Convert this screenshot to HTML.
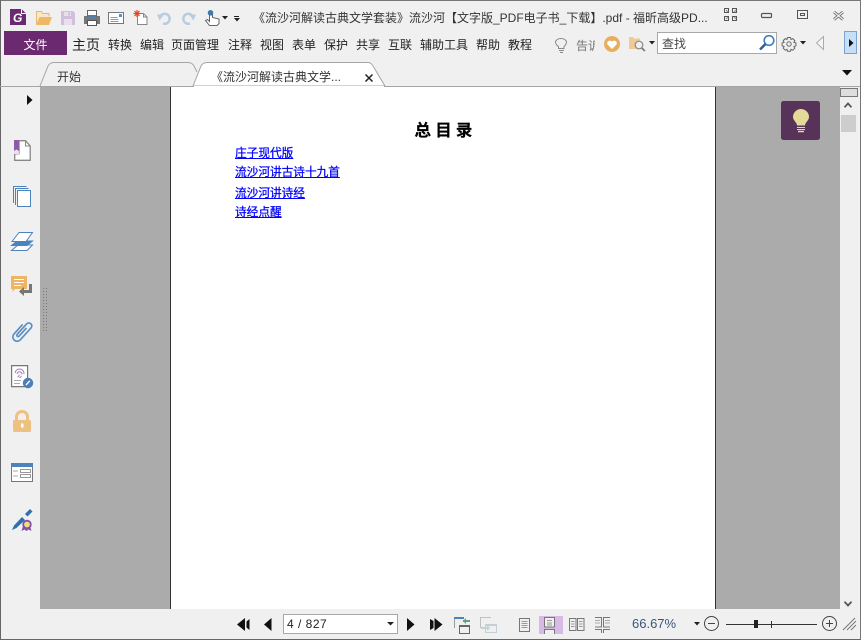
<!DOCTYPE html>
<html><head><meta charset="utf-8">
<style>
html,body{margin:0;padding:0;width:861px;height:640px;overflow:hidden;background:#f0f0f0}
body{position:relative;font-family:"Liberation Sans","Noto Sans CJK SC",sans-serif;color:#333}
.a{position:absolute;white-space:nowrap}
.m{position:absolute;top:37px;font-size:12px;line-height:16px;color:#222;white-space:nowrap}
a.l{position:absolute;left:235px;font-size:11.67px;line-height:14px;color:#00f;text-decoration:underline;white-space:nowrap;-webkit-text-stroke:.25px #00f}
svg{position:absolute;overflow:visible}
</style></head><body>
<!-- window border -->
<div class="a" style="left:0;top:0;width:861px;height:1px;background:#777"></div>
<div class="a" style="left:0;top:0;width:1px;height:640px;background:#666"></div>
<div class="a" style="left:860px;top:0;width:1px;height:640px;background:#777"></div>
<div class="a" style="left:0;top:639px;width:861px;height:1px;background:#666"></div>

<!-- app logo -->
<svg style="left:10px;top:9px" width="16" height="16"><path d="M0 0h11l5 5v11H0z" fill="#6a2a70"/><path d="M11 0l5 5h-5z" fill="#fff"/><path d="M12 .5l3.500 3.500h-3.500z" fill="#6a2a70"/><text x="3" y="13" font-family="Liberation Sans" font-weight="bold" font-style="italic" font-size="12" fill="#fff">G</text></svg>
<!-- open -->
<svg style="left:36px;top:11px" width="16" height="14"><path d="M.5 13V.5h5l1 2h6.500v3" fill="#f9e8c8" stroke="#e6b673"/><path d="M0 14l3.500-8h12.500l-3 8z" fill="#efb866"/></svg>
<!-- save -->
<svg style="left:61px;top:11px" width="14" height="14"><path d="M0 0h12l2 2v12H0z" fill="#d2bfdc"/><path d="M3 1h7v4H3z" fill="#e9e0ee"/><path d="M7 1.500h2v3H7z" fill="#d2bfdc"/><path d="M3 8h8v6H3z" fill="#e9e0ee"/></svg>
<!-- print -->
<svg style="left:84px;top:10px" width="16" height="16"><path d="M0 6h16v8H0z" fill="#777"/><path d="M3.500.5h9v6h-9z" fill="#fff" stroke="#666"/><path d="M4 5h8v2H4z" fill="#4a7fb5"/><path d="M3.500 10.500h9v5h-9z" fill="#fff" stroke="#555"/></svg>
<!-- email -->
<svg style="left:108px;top:12px" width="16" height="12"><path d="M.5.5h15v11H.5z" fill="#fff" stroke="#777"/><path d="M2.500 5.500h7M2.500 7.500h8M2.500 9.500h8" stroke="#999"/><path d="M11 2h3v3h-3z" fill="#5a8fc2"/></svg>
<!-- new -->
<svg style="left:133px;top:10px" width="15" height="15"><path d="M4.500 3.500h6l3.500 3.500v7.500h-9.500z" fill="#fff" stroke="#888"/><path d="M10.500 3.500v3.500h3.500" fill="none" stroke="#888"/><path d="M4 0v7M.5 3.500h7M1.500 1l5 5M6.500 1l-5 5" stroke="#e0492a" stroke-width="1.200"/></svg>
<!-- undo/redo -->
<svg style="left:157px;top:11px" width="15" height="14"><path d="M3 6a5 5 0 1 1 3 6.500" fill="none" stroke="#b9cde0" stroke-width="2.500"/><path d="M0 3.500h7L2.500 9.500z" fill="#b9cde0"/></svg>
<svg style="left:181px;top:11px" width="15" height="14"><path d="M12 6a5 5 0 1 0-3 6.500" fill="none" stroke="#b9cde0" stroke-width="2.500"/><path d="M15 3.500H8l4.500 6z" fill="#b9cde0"/></svg>
<!-- hand -->
<svg style="left:205px;top:10px" width="15" height="16"><circle cx="5.500" cy="2.800" r="2.800" fill="#3d78b5"/><path d="M4.500 5v6.500L2.500 9.500.5 10.500l4 5h7.500l2-2V9L7.500 7.500V5z" fill="#fff" stroke="#666"/></svg>
<svg style="left:222px;top:16px" width="6" height="4"><path d="M0 0h6L3 3.500z" fill="#222"/></svg>
<svg style="left:234px;top:16px" width="6" height="6"><path d="M0 .5h5" stroke="#222"/><path d="M0 2h6L3 5.500z" fill="#222"/></svg>

<!-- title -->
<div class="a" style="left:253px;top:10px;font-size:12px;line-height:16px;color:#333">《流沙河解读古典文学套装》流沙河【文字版_PDF电子书_下载】.pdf - 福昕高级PD...</div>

<!-- window controls -->
<svg style="left:724px;top:8px" width="14" height="14"><path d="M.5.500h4v4h-4zM8.500.500h4v4h-4zM.5 8.500h4v4h-4zM8.500 8.500h4v4h-4z" fill="#f0f0f0" stroke="#555"/><path d="M2 2l2 2M10 4l2-2M2 11l2-2M10 9l2 2" stroke="#888"/></svg>
<svg style="left:761px;top:13px" width="12" height="6"><rect x=".5" y=".5" width="10" height="4" rx="1" fill="none" stroke="#555" stroke-width="1.200"/></svg>
<svg style="left:797px;top:10px" width="11" height="9"><path d="M.5.500h10v8H.5z" fill="none" stroke="#555"/><path d="M3.500 3.500h4v2h-4z" fill="none" stroke="#555"/></svg>
<svg style="left:833px;top:11px" width="12" height="10"><path d="M1 1l9 7.500M10 1L1 8.500" stroke="#666" stroke-width="2.800"/><path d="M1 1l9 7.500M10 1L1 8.500" stroke="#f0f0f0" stroke-width="1.200"/></svg>

<!-- menu -->
<div class="a" style="left:4px;top:31px;width:63px;height:24px;background:#6b2a70;color:#fff;font-size:12px;line-height:29px;text-align:center">文件</div>
<div class="m" style="left:72px;font-size:14px;top:37px">主页</div>
<div class="m" style="left:108px">转换</div>
<div class="m" style="left:140px">编辑</div>
<div class="m" style="left:171px">页面管理</div>
<div class="m" style="left:228px">注释</div>
<div class="m" style="left:260px">视图</div>
<div class="m" style="left:292px">表单</div>
<div class="m" style="left:324px">保护</div>
<div class="m" style="left:356px">共享</div>
<div class="m" style="left:388px">互联</div>
<div class="m" style="left:420px">辅助工具</div>
<div class="m" style="left:476px">帮助</div>
<div class="m" style="left:508px">教程</div>

<!-- tell me -->
<svg style="left:555px;top:36px" width="13" height="17"><path d="M3.500 10.500C1 9 .5 7 .5 5.500a6 5 0 0 1 11 0c0 1.500-.5 3.500-2.500 5v2H3.500z" fill="none" stroke="#888"/><path d="M4 14.500h5M5 16.500h3" stroke="#888"/></svg>
<div class="a" style="left:576px;top:38px;width:19px;overflow:hidden;font-size:12px;line-height:16px;color:#777">告诉我</div>
<svg style="left:604px;top:36px" width="16" height="16"><circle cx="8" cy="8" r="8" fill="#e8ae5e"/><path d="M8 13L3.500 8.500C2 5.500 6 3 8 5.800 10 3 14 5.500 12.500 8.500z" fill="#fff"/></svg>
<svg style="left:629px;top:36px" width="17" height="16"><path d="M0 1h4l1 1.500h6V5H7L5 13H0z" fill="#f0ca96"/><path d="M0 4h10v9H0z" fill="#f0ca96"/><circle cx="10" cy="9" r="3.800" fill="#f0f0f0" stroke="#888" stroke-width="1.200"/><path d="M12.800 12l3 3" stroke="#777" stroke-width="1.600"/></svg>
<svg style="left:649px;top:41px" width="6" height="4"><path d="M0 0h6L3 3.500z" fill="#222"/></svg>
<!-- search -->
<div class="a" style="left:657px;top:32px;width:118px;height:20px;background:#fff;border:1px solid #a8a8a8"></div>
<div class="a" style="left:662px;top:36px;font-size:12px;line-height:16px;color:#444">查找</div>
<svg style="left:759px;top:35px" width="16" height="16"><circle cx="10" cy="5.500" r="4.800" fill="#fff" stroke="#3f7fbf" stroke-width="1.600"/><path d="M6.500 9L1 14.500" stroke="#2a5f99" stroke-width="2.400"/></svg>
<!-- gear -->
<svg style="left:782px;top:37px" width="14" height="14"><path d="M5.500.5h3l.5 2 1.800-.9 2 2-.9 1.800 2 .5v3l-2 .5.900 1.800-2 2-1.800-.9-.5 2h-3l-.5-2-1.800.9-2-2 .9-1.800-2-.5v-3l2-.5-.9-1.800 2-2 1.800.9z" fill="none" stroke="#666"/><circle cx="7" cy="7" r="2.200" fill="none" stroke="#666"/></svg>
<svg style="left:800px;top:41px" width="6" height="4"><path d="M0 0h6L3 3.500z" fill="#222"/></svg>
<svg style="left:816px;top:36px" width="8" height="14"><path d="M7.500.5v13L.5 7z" fill="#f5f5f5" stroke="#aaa"/></svg>
<div class="a" style="left:844px;top:31px;width:11px;height:21px;background:#c4dff6;border:1px solid #7da2ce"></div>
<svg style="left:849px;top:39px" width="5" height="8"><path d="M0 0l4.500 4L0 8z" fill="#111"/></svg>
<svg style="left:842px;top:70px" width="10" height="6"><path d="M0 0h10L5 5.500z" fill="#111"/></svg>

<!-- tabs -->
<svg style="left:0;top:60px" width="861" height="28">
<path d="M40 26L48 6Q50 2.500 54 2.500H188Q192 2.500 194 6L197 12" fill="#f0f0f0" stroke="#a5a5a5"/>
<path d="M193 26L201 6Q203 2.500 207 2.500H368Q371 2.500 373 6L385 26Z" fill="#fff" stroke="#a5a5a5"/>
</svg>
<div class="a" style="left:57px;top:69px;font-size:12px;line-height:16px;color:#333">开始</div>
<div class="a" style="left:211px;top:69px;font-size:12px;line-height:16px;color:#333">《流沙河解读古典文学...</div>
<svg style="left:365px;top:74px" width="8" height="8"><path d="M.5.500l7 7M7.500.500l-7 7" stroke="#222" stroke-width="1.500"/></svg>
<div class="a" style="left:0;top:86px;width:860px;height:1px;background:#a5a5a5"></div>
<div class="a" style="left:194px;top:86px;width:190px;height:1px;background:#fff"></div>

<!-- left panel -->
<div class="a" style="left:1px;top:87px;width:39px;height:522px;background:#f0f0f0"></div>
<svg style="left:27px;top:95px" width="6" height="10"><path d="M0 0l5.500 5L0 10z" fill="#111"/></svg>
<!-- main gray -->
<div class="a" style="left:40px;top:87px;width:800px;height:522px;background:#ababab"></div>
<div class="a" style="left:170px;top:87px;width:546px;height:522px;background:#fff;box-sizing:border-box;border-left:1px solid #333;border-right:1px solid #333"></div>
<svg style="left:43px;top:288px" width="5" height="44"><path d="M.5 0v44M3.500 0v44" stroke="#777" stroke-dasharray="1 2"/></svg>

<!-- sidebar icons -->
<svg style="left:14px;top:140px" width="17" height="22"><path d="M.7 14v6.300h15.500V6L11.500.7H5v13z" fill="#fff" stroke="#888" stroke-width="1.300"/><path d="M11.500 1v5h4.500" fill="none" stroke="#888"/><path d="M0 0h5v11L2.500 9.500 0 11z" fill="#8e5aa8"/><path d="M0 11h5v3H0z" fill="#e6e0ec"/></svg>
<svg style="left:13px;top:186px" width="18" height="21"><path d="M.5 17V.5h13M2.500 19V2.500h13" fill="none" stroke="#4d82ba"/><path d="M4.500 4.500h13v16h-13z" fill="#fff" stroke="#4d82ba"/></svg>
<svg style="left:11px;top:232px" width="22" height="20"><path d="M.5 18.500L7 13h14.500L16 18.500z" fill="#fff" stroke="#4d82ba"/><path d="M.5 13.500L6 9h15.500L16 13.500z" fill="#4d82ba" stroke="#4d82ba"/><path d="M1 9.500L8 .5h13.500L15 9.500z" fill="#fff" stroke="#4d82ba"/></svg>
<svg style="left:11px;top:276px" width="21" height="21"><path d="M0 0h16v13H4l-2.500 3v-3H0z" fill="#efb566"/><path d="M3 3.500h10M3 6.500h10M3 9.500h7" stroke="#fff"/><path d="M19.500 8v7.500H9" fill="none" stroke="#777" stroke-width="3"/><path d="M13 11v9l-5-4.500z" fill="#777"/></svg>
<svg style="left:13px;top:321px" width="20" height="21"><g transform="rotate(42 10 10.500)"><path d="M5.500 6v13a4.300 4.300 0 0 0 8.600 0V3a3 3 0 0 0-6 0v14a1.300 1.300 0 0 0 2.600 0V6" transform="translate(-.5 -.5)" fill="none" stroke="#5a8fc6" stroke-width="1.700"/></g></svg>
<svg style="left:11px;top:365px" width="23" height="23"><path d="M.6.600h16v21h-16z" fill="#fff" stroke="#777" stroke-width="1.200"/><path d="M4 8a4.500 4.500 0 1 1 9 1M6 9a2.500 2.500 0 1 1 5 .5M8 9.500q.5 2-1.500 2.500M10.500 11q-1 1.500-2 2" fill="none" stroke="#a57abb"/><path d="M3 15.500h7M3 18.500h6" stroke="#aaa"/><circle cx="17" cy="18" r="5.200" fill="#4a7fb8"/><path d="M15 20l3.800-4.200" stroke="#fff" stroke-width="1.400"/></svg>
<svg style="left:13px;top:410px" width="18" height="22"><path d="M3.500 11V6.500a5.500 5 0 0 1 11 0V11" fill="none" stroke="#edc182" stroke-width="3"/><rect y="10" width="18" height="12" rx="1.500" fill="#edc182"/><path d="M8 13.500h2.500v4H8z" fill="#fff"/></svg>
<svg style="left:11px;top:463px" width="22" height="19"><path d="M.5.500h21v18H.5z" fill="#fff" stroke="#777"/><path d="M0 0h22v4H0z" fill="#4d82ba"/><path d="M9.500 6.500h10v3h-10zM9.500 11.500h10v3h-10z" fill="none" stroke="#999"/><path d="M2 8h5M2 13h5" stroke="#aaa"/></svg>
<svg style="left:12px;top:509px" width="21" height="23"><path d="M0 21l2-4.500 8-8.500 3 3-8.500 8z" fill="#2f70b0"/><path d="M13 5l5-5 2.500 2.500-5 5z" fill="#2f70b0"/><path d="M11 17l-1.500 5 3-1.500 2 1.500 2-1.500 3 1.500-1.500-5" fill="#8452a0"/><circle cx="15" cy="15.500" r="3.800" fill="#f0dc8a" stroke="#8452a0" stroke-width="1.800"/></svg>

<!-- page content -->
<div class="a" style="left:414.500px;top:121px;font-size:16.500px;line-height:20px;font-weight:bold;color:#000;letter-spacing:4.200px;-webkit-text-stroke:.2px #000">总目录</div>
<a class="l" style="top:147px">庄子现代版</a>
<a class="l" style="top:166px">流沙河讲古诗十九首</a>
<a class="l" style="top:187px">流沙河讲诗经</a>
<a class="l" style="top:206px">诗经点醒</a>

<!-- tip -->
<svg style="left:781px;top:101px" width="39" height="39"><rect width="39" height="39" rx="2.500" fill="#573259"/><path d="M16 24.500c0-3-4-5-4-8.500a8 8 0 0 1 16 0c0 3.500-4 5.500-4 8.500z" fill="#e5d998"/><path d="M16 26.500h8M16 28.500h8" stroke="#e5d998"/><path d="M17 30.500h6" stroke="#e5d998" stroke-width="1.500"/></svg>

<!-- scrollbar -->
<div class="a" style="left:840px;top:87px;width:20px;height:522px;background:#f0f0f0"></div>
<div class="a" style="left:840px;top:88px;width:16px;height:7px;background:#dedede;border:1px solid #777"></div>
<svg style="left:844px;top:102px" width="8" height="6"><path d="M.5 5.300L4 1.500l3.500 3.800" fill="none" stroke="#555" stroke-width="1.800"/></svg>
<div class="a" style="left:841px;top:115px;width:15px;height:17px;background:#cdcdcd"></div>
<svg style="left:844px;top:601px" width="8" height="6"><path d="M.5.700L4 4.500 7.500.7" fill="none" stroke="#555" stroke-width="1.800"/></svg>

<!-- status bar -->
<svg style="left:237px;top:618px" width="13" height="13"><path d="M8 0v13L0 6.500z" fill="#111"/><path d="M12.500 1v11L9.500 9.500v-6z" fill="#111"/></svg>
<svg style="left:264px;top:618px" width="8" height="13"><path d="M7.500 0v13L0 6.500z" fill="#111"/></svg>
<div class="a" style="left:283px;top:614px;width:113px;height:18px;background:#fff;border:1px solid #a8a8a8"></div>
<div class="a" style="left:287px;top:616px;font-size:12px;line-height:16px;color:#222;letter-spacing:.5px">4 / 827</div>
<svg style="left:387px;top:622px" width="7" height="4"><path d="M0 0h7L3.500 3.500z" fill="#222"/></svg>
<svg style="left:407px;top:618px" width="8" height="13"><path d="M0 0v13l7.500-6.500z" fill="#111"/></svg>
<svg style="left:430px;top:618px" width="13" height="13"><path d="M0 1l3.500 2v7L0 12z" fill="#111"/><path d="M4.500 0v13L12.500 6.500z" fill="#111"/></svg>
<svg style="left:454px;top:617px" width="17" height="17"><path d="M.5 11V.5H10" fill="none" stroke="#999"/><path d="M0 0h10v2H0z" fill="#4d82ba"/><path d="M5.500 8.500h10v8h-10z" fill="#f0f0f0" stroke="#666"/><path d="M5 8h11v2H5z" fill="#666"/><path d="M9 3h7v2H9zM9 4l3-3v6z" fill="#5f9e90"/></svg>
<svg style="left:480px;top:617px" width="17" height="16"><path d="M.5 11V.5H11" fill="none" stroke="#c0c0c0"/><path d="M5.500 7.500h11v8h-11z" fill="#f0f0f0" stroke="#c5cfd8"/><path d="M5 7h12v2H5z" fill="#c5cfd8"/><path d="M1 10h6v2H1zM7 8l3 3-3 3z" fill="#bcd5cf"/></svg>
<svg style="left:519px;top:618px" width="11" height="14"><path d="M.5.500h10v13H.5z" fill="none" stroke="#777"/><path d="M2.500 3.500h6M2.500 5.500h6M2.500 7.500h6M2.500 9.500h6" stroke="#999"/></svg>
<div class="a" style="left:539px;top:616px;width:24px;height:18px;background:#d9b9e6"></div>
<svg style="left:544px;top:617px" width="12" height="17"><path d="M.5.500h10v9.500H.5z" fill="#f0f0f0" stroke="#777"/><path d="M3 3.500h5M3 6h5M3 8h5" stroke="#999"/><path d="M.5 17v-4.500h10V17" fill="#f0f0f0" stroke="#777"/></svg>
<svg style="left:569px;top:618px" width="16" height="13"><path d="M.5.500h6.500v12H.5zM8.500.5H15v12H8.500z" fill="none" stroke="#777"/><path d="M2 3.500h3.500M2 6h3.500M2 8.500h3.500M10 3.500h3.500M10 6h3.500M10 8.500h3.500" stroke="#999"/></svg>
<svg style="left:595px;top:617px" width="15" height="16"><path d="M0 .5h6.500V10H0M15 .5H8.500V10H15M0 12.500h6.500V16M15 12.500H8.500V16" fill="none" stroke="#777"/><path d="M0 3.500h5M0 6h5M10 3.500h5M10 6h5" stroke="#aaa"/></svg>
<div class="a" style="left:632px;top:616px;font-size:13px;line-height:16px;color:#3b5578">66.67%</div>
<svg style="left:694px;top:622px" width="6" height="4"><path d="M0 0h6L3 3.500z" fill="#222"/></svg>
<svg style="left:704px;top:616px" width="15" height="15"><circle cx="7.500" cy="7.500" r="7" fill="none" stroke="#444"/><path d="M4 7.500h7" stroke="#444"/></svg>
<svg style="left:726px;top:619px" width="92" height="11"><path d="M0 5.500h91" stroke="#333"/><path d="M28 1h4v8h-4z" fill="#222"/><path d="M45.500 2v7" stroke="#333"/></svg>
<svg style="left:822px;top:616px" width="15" height="15"><circle cx="7.500" cy="7.500" r="7" fill="none" stroke="#444"/><path d="M4 7.500h7M7.500 4v7" stroke="#444"/></svg>
<svg style="left:843px;top:618px" width="13" height="12"><path d="M0 12L12 0M4 12L13 3M8 12l5-5" stroke="#777"/></svg>
</body></html>
